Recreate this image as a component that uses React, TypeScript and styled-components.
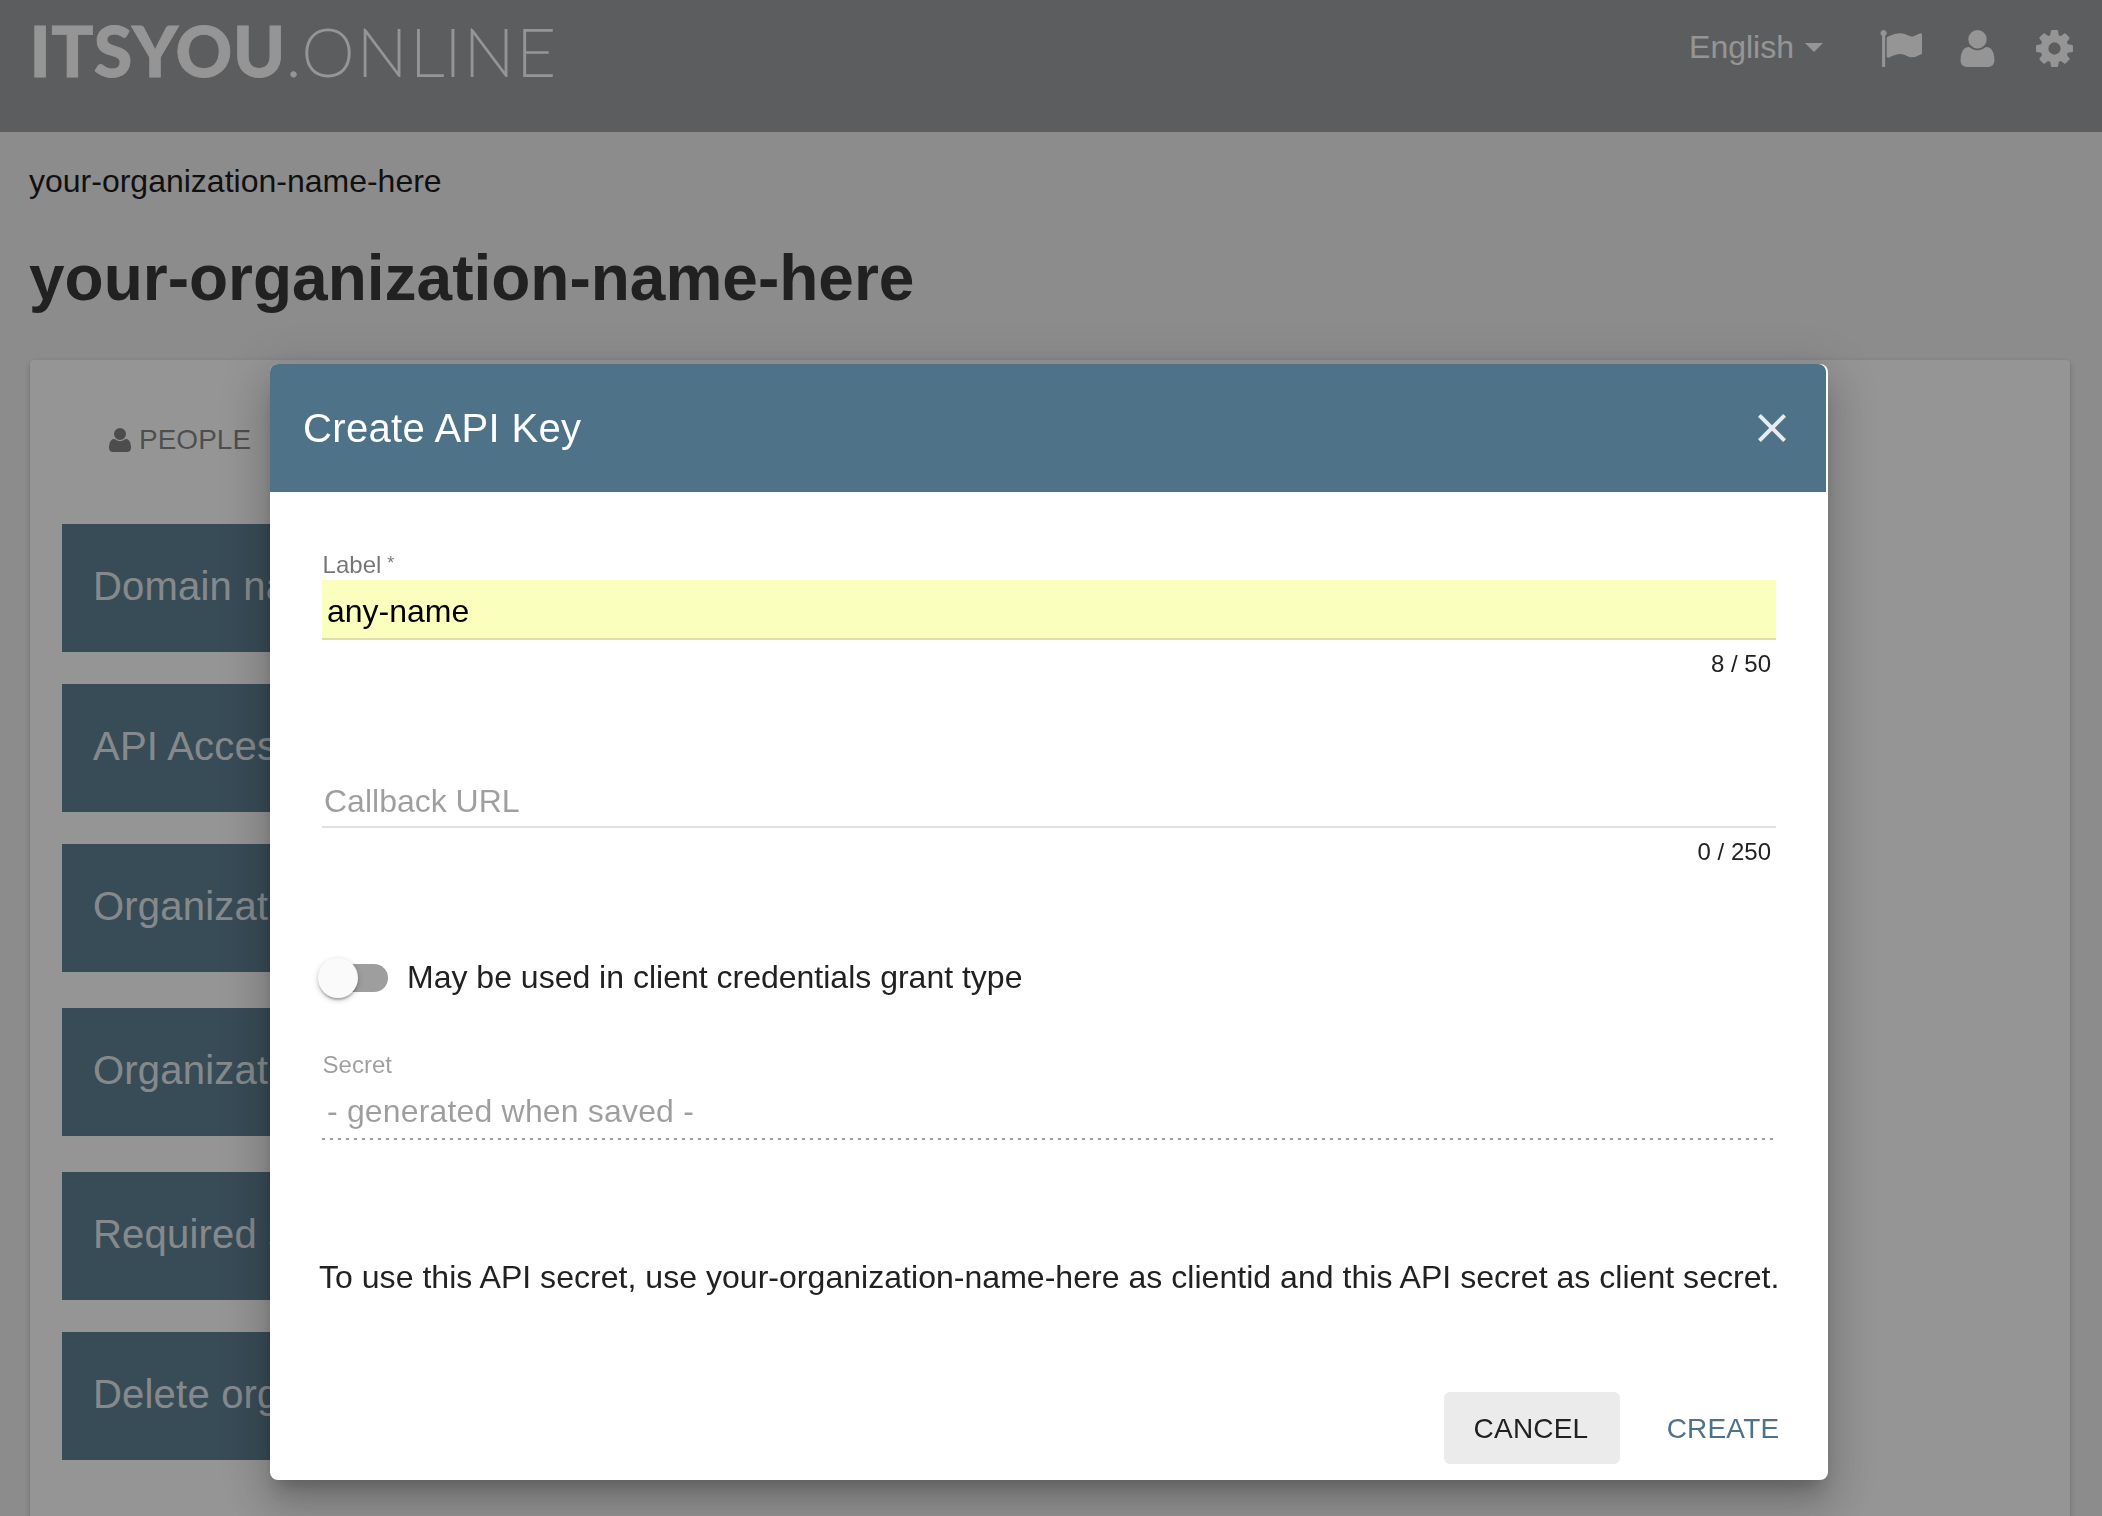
import React from "react";
import styled, { createGlobalStyle } from "styled-components";

const PRIMARY = "#4e7389";

const GlobalStyle = createGlobalStyle`
  *, *::before, *::after { box-sizing: border-box; }
  html, body { margin: 0; height: 100%; overflow: hidden; }
  body {
    font-family: "Liberation Sans", Arial, Helvetica, sans-serif;
    font-size: 32px;
    color: #212121;
    background: #eeeeee;
  }
`;

const Page = styled.div`
  height: 1516px;
  overflow: hidden;
  background: #eeeeee;
`;

const TopBar = styled.header`
  display: flex;
  justify-content: space-between;
  align-items: flex-start;
  height: 132px;
  padding: 0 26px 0 28px;
  background: #939598;
  color: #fff;
`;

const Logo = styled.svg`
  display: block;
  width: 540px;
  height: 100px;
  fill: #fff;
  stroke: #fff;
  font-family: Lato, sans-serif;
  text-anchor: middle;
`;

const Nav = styled.nav`
  display: flex;
  align-items: flex-start;
  padding-top: 27px;
`;

const Language = styled.div`
  display: flex;
  align-items: center;
  gap: 11px;
  height: 40px;
  margin-right: 56px;
  line-height: 40px;
`;

const Caret = styled.i`
  border: 9px solid transparent;
  border-top-color: #fff;
  border-bottom: 0;
  margin-top: 1px;
`;

const NavIcons = styled.div`
  display: flex;
  gap: 34px;
`;

const Glyph = styled.svg<{ $size: number }>`
  display: block;
  flex: none;
  width: ${(p) => p.$size}px;
  height: ${(p) => p.$size}px;
  fill: currentColor;
`;

const Content = styled.main`
  padding: 29px 32px 0 30px;
`;

const Breadcrumb = styled.div`
  margin-left: -1px;
  line-height: 40px;
  color: #000;
`;

const Title = styled.h1`
  margin: 41px 0 46px -1px;
  font-size: 64px;
  line-height: 72px;
  font-weight: 700;
`;

const Card = styled.section`
  height: 1240px;
  padding: 0 32px;
  border-radius: 4px;
  background: #fff;
  box-shadow: 0 2px 6px rgba(0, 0, 0, 0.2), 0 2px 2px rgba(0, 0, 0, 0.14),
    0 4px 2px -2px rgba(0, 0, 0, 0.12);
`;

const Tabs = styled.div`
  display: flex;
  align-items: flex-start;
  height: 164px;
  padding: 64px 0 0 44px;
`;

const Tab = styled.div`
  display: flex;
  align-items: center;
  gap: 5px;
  color: rgba(0, 0, 0, 0.54);
  font-size: 28px;
  line-height: 31px;
`;

const Panel = styled.div<{ $gap: number }>`
  width: 1500px;
  height: 128px;
  margin-bottom: ${(p) => p.$gap}px;
  padding: 0 31px;
  background: ${PRIMARY};
  color: rgba(255, 255, 255, 0.87);
  font-size: 40px;
  line-height: 124px;
  letter-spacing: 0.2px;
  white-space: nowrap;
`;

const Backdrop = styled.div`
  position: fixed;
  inset: 0;
  padding: 364px 0 0 270px;
  background: rgba(33, 33, 33, 0.48);
`;

const Dialog = styled.div`
  display: flex;
  flex-direction: column;
  width: 1558px;
  height: 1116px;
  border-radius: 8px;
  background: #fff;
  box-shadow: 0 14px 16px -8px rgba(0, 0, 0, 0.2),
    0 26px 38px 4px rgba(0, 0, 0, 0.14), 0 10px 48px 8px rgba(0, 0, 0, 0.12);
`;

const DialogHeader = styled.div`
  display: flex;
  align-items: center;
  justify-content: space-between;
  height: 128px;
  margin-right: 2px;
  padding: 0 30px 0 33px;
  border-radius: 8px 8px 0 0;
  background: ${PRIMARY};
  color: #fff;
  font-size: 40px;
  line-height: 128px;
  letter-spacing: 0.35px;
`;

const DialogBody = styled.div`
  flex: 1;
  padding: 59px 52px 0;
`;

const Field = styled.div<{ $after: number }>`
  margin-bottom: ${(p) => p.$after}px;
`;

const FieldLabel = styled.div<{ $muted?: boolean }>`
  display: flex;
  margin-bottom: 2px;
  padding-left: 0.6px;
  font-size: 24px;
  line-height: 27px;
  color: ${(p) => (p.$muted ? "rgba(0,0,0,.38)" : "rgba(0,0,0,.54)")};
`;

const Required = styled.span`
  margin-left: 6px;
  font-size: 18px;
  line-height: 25px;
`;

const FilledInput = styled.div`
  height: 60px;
  padding: 4px 5px 0;
  border-bottom: 2px solid #dce0a6;
  background: #faffbd;
  color: #000;
  line-height: 54px;
`;

const EmptyInput = styled.div`
  height: 60px;
  padding: 8px 0 0 2px;
  border-bottom: 2px solid #e0e0e0;
  color: rgba(0, 0, 0, 0.38);
  line-height: 50px;
`;

const DisabledInput = styled.div`
  height: 60px;
  padding: 5px 5px 0;
  color: rgba(0, 0, 0, 0.38);
  line-height: 53px;
  letter-spacing: 0.17px;
  background: linear-gradient(
      to right,
      rgba(0, 0, 0, 0.38) 0 3px,
      transparent 3px 8px
    )
    left bottom / 8px 2px repeat-x;
`;

const Counter = styled.div`
  margin-top: 10px;
  padding-right: 5px;
  font-size: 24px;
  line-height: 27px;
  text-align: right;
`;

const SwitchRow = styled.div`
  display: flex;
  align-items: center;
  gap: 19px;
  height: 40px;
  margin: 0 0 53px -4px;
  line-height: 38px;
`;

const Track = styled.div`
  display: flex;
  align-items: center;
  width: 66px;
  height: 28px;
  margin-left: 4px;
  border-radius: 14px;
  background: #9e9e9e;
`;

const Thumb = styled.div`
  flex: none;
  width: 40px;
  height: 40px;
  margin-left: -4px;
  border-radius: 50%;
  background: #fafafa;
  box-shadow: 0 2px 6px rgba(0, 0, 0, 0.2), 0 2px 2px rgba(0, 0, 0, 0.14),
    0 4px 2px -2px rgba(0, 0, 0, 0.12);
`;

const SwitchLabel = styled.span`
  margin-top: -2px;
`;

const Note = styled.p`
  margin: 0 -4px 0 -3px;
  line-height: 40px;
  letter-spacing: 0.035px;
  white-space: nowrap;
`;

const Actions = styled.div`
  display: flex;
  justify-content: flex-end;
  gap: 16px;
  padding: 0 16px 16px;
`;

const Button = styled.button<{ $focused?: boolean }>`
  width: 176px;
  height: 72px;
  padding: 1px 2px 0 0;
  border: 0;
  border-radius: 6px;
  background: ${(p) => (p.$focused ? "#ebebeb" : "transparent")};
  color: ${(p) => (p.$focused ? "#212121" : PRIMARY)};
  font-family: inherit;
  font-size: 28px;
  line-height: 71px;
  letter-spacing: 0.2px;
`;

const FLAG =
  "M320 256q0 72-64 110v1266q0 13-9.5 22.5t-22.5 9.5h-64q-13 0-22.5-9.5t-9.5-22.5v-1266q-64-38-64-110 0-53 37.5-90.5t90.5-37.5 90.5 37.5 37.5 90.5zm1472 64v763q0 25-12.5 38.5t-39.5 27.5q-215 116-369 116-61 0-123.5-22t-108.5-48-115.5-48-142.5-22q-192 0-464 146-17 9-33 9-26 0-45-19t-19-45v-742q0-32 31-55 21-14 79-43 236-120 421-120 107 0 200 29t219 88q38 19 88 19 54 0 117.5-21t110-47 88-47 54.5-21q26 0 45 19t19 45z";
const USER =
  "M1600 1405q0 120-73 189.5t-194 69.5h-874q-121 0-194-69.5t-73-189.5q0-53 3.5-103.5t14-109 26.5-108.5 43-97.5 62-81 85.5-53.5 111.5-20q9 0 42 21.5t74.5 48 108 48 133.5 21.5 133.5-21.5 108-48 74.5-48 42-21.5q61 0 111.5 20t85.5 53.5 62 81 43 97.5 26.5 108.5 14 109 3.5 103.5zm-320-893q0 159-112.5 271.5t-271.5 112.5-271.5-112.5-112.5-271.5 112.5-271.5 271.5-112.5 271.5 112.5 112.5 271.5z";
const COG =
  "M1152 896q0-106-75-181t-181-75-181 75-75 181 75 181 181 75 181-75 75-181zm512-109v222q0 12-8 23t-20 13l-185 28q-19 54-39 91 35 50 107 138 10 12 10 25t-9 23q-27 37-99 108t-94 71q-12 0-26-9l-138-108q-44 23-91 38-16 136-29 186-7 28-36 28h-222q-14 0-24.5-8.5t-11.5-21.5l-28-184q-49-16-90-37l-141 107q-10 9-25 9-14 0-25-11-126-114-165-168-7-10-7-23 0-12 8-23 15-21 51-66.5t54-70.5q-27-50-41-99l-183-27q-13-2-21-12.5t-8-23.5v-222q0-12 8-23t19-13l186-28q14-46 39-92-40-57-107-138-10-12-10-24 0-10 9-23 26-36 98.5-107.5t94.5-71.5q13 0 26 10l138 107q44-23 91-38 16-136 29-186 7-28 36-28h222q14 0 24.5 8.5t11.5 21.5l28 184q49 16 90 37l142-107q9-9 24-9 13 0 25 10 129 119 165 170 7 8 7 22 0 12-8 23-15 21-51 66.5t-54 70.5q26 50 41 98l183 28q13 2 21 12.5t8 23.5z";

const AwesomeIcon = ({ d, size }: { d: string; size: number }) => (
  <Glyph $size={size} viewBox="0 0 1792 1792">
    <path d={d} />
  </Glyph>
);

const panels = [
  { title: "Domain names", gap: 32 },
  { title: "API Access Keys", gap: 32 },
  { title: "Organization structure", gap: 36 },
  { title: "Organization settings", gap: 36 },
  { title: "Required scopes", gap: 32 },
  { title: "Delete organization", gap: 0 },
];

export default function App() {
  return (
    <>
      <GlobalStyle />
      <Page>
        <TopBar>
          <Logo viewBox="0 0 540 100">
            <text
              x="12 44.5 85 127 176 231"
              y="77.3"
              fontSize="70"
              fontWeight="900"
              strokeWidth="0.8"
            >
              ITSYOU
            </text>
            <text
              x="265.5 300 354 399 425 461 508"
              y="76"
              fontSize="67"
              fontWeight="100"
              strokeWidth="2"
            >
              .ONLINE
            </text>
          </Logo>
          <Nav>
            <Language>
              English
              <Caret />
            </Language>
            <NavIcons>
              <AwesomeIcon d={FLAG} size={43} />
              <AwesomeIcon d={USER} size={43} />
              <AwesomeIcon d={COG} size={43} />
            </NavIcons>
          </Nav>
        </TopBar>
        <Content>
          <Breadcrumb>your-organization-name-here</Breadcrumb>
          <Title>your-organization-name-here</Title>
          <Card>
            <Tabs>
              <Tab>
                <AwesomeIcon d={USER} size={28} />
                PEOPLE
              </Tab>
            </Tabs>
            {panels.map((p) => (
              <Panel key={p.title} $gap={p.gap}>
                {p.title}
              </Panel>
            ))}
          </Card>
        </Content>
      </Page>
      <Backdrop>
        <Dialog role="dialog">
          <DialogHeader>
            Create API Key
            <Glyph $size={48} viewBox="0 0 24 24" opacity={0.87}>
              <path d="M19 6.41L17.59 5 12 10.59 6.41 5 5 6.41 10.59 12 5 17.59 6.41 19 12 13.41 17.59 19 19 17.59 13.41 12z" />
            </Glyph>
          </DialogHeader>
          <DialogBody>
            <Field $after={91}>
              <FieldLabel>
                Label<Required>*</Required>
              </FieldLabel>
              <FilledInput>any-name</FilledInput>
              <Counter>8 / 50</Counter>
            </Field>
            <Field $after={93}>
              <EmptyInput>Callback URL</EmptyInput>
              <Counter>0 / 250</Counter>
            </Field>
            <SwitchRow>
              <Track>
                <Thumb />
              </Track>
              <SwitchLabel>May be used in client credentials grant type</SwitchLabel>
            </SwitchRow>
            <Field $after={117}>
              <FieldLabel $muted>Secret</FieldLabel>
              <DisabledInput>- generated when saved -</DisabledInput>
            </Field>
            <Note>
              To use this API secret, use your-organization-name-here as clientid and this
              API secret as client secret.
            </Note>
          </DialogBody>
          <Actions>
            <Button $focused>CANCEL</Button>
            <Button>CREATE</Button>
          </Actions>
        </Dialog>
      </Backdrop>
    </>
  );
}
